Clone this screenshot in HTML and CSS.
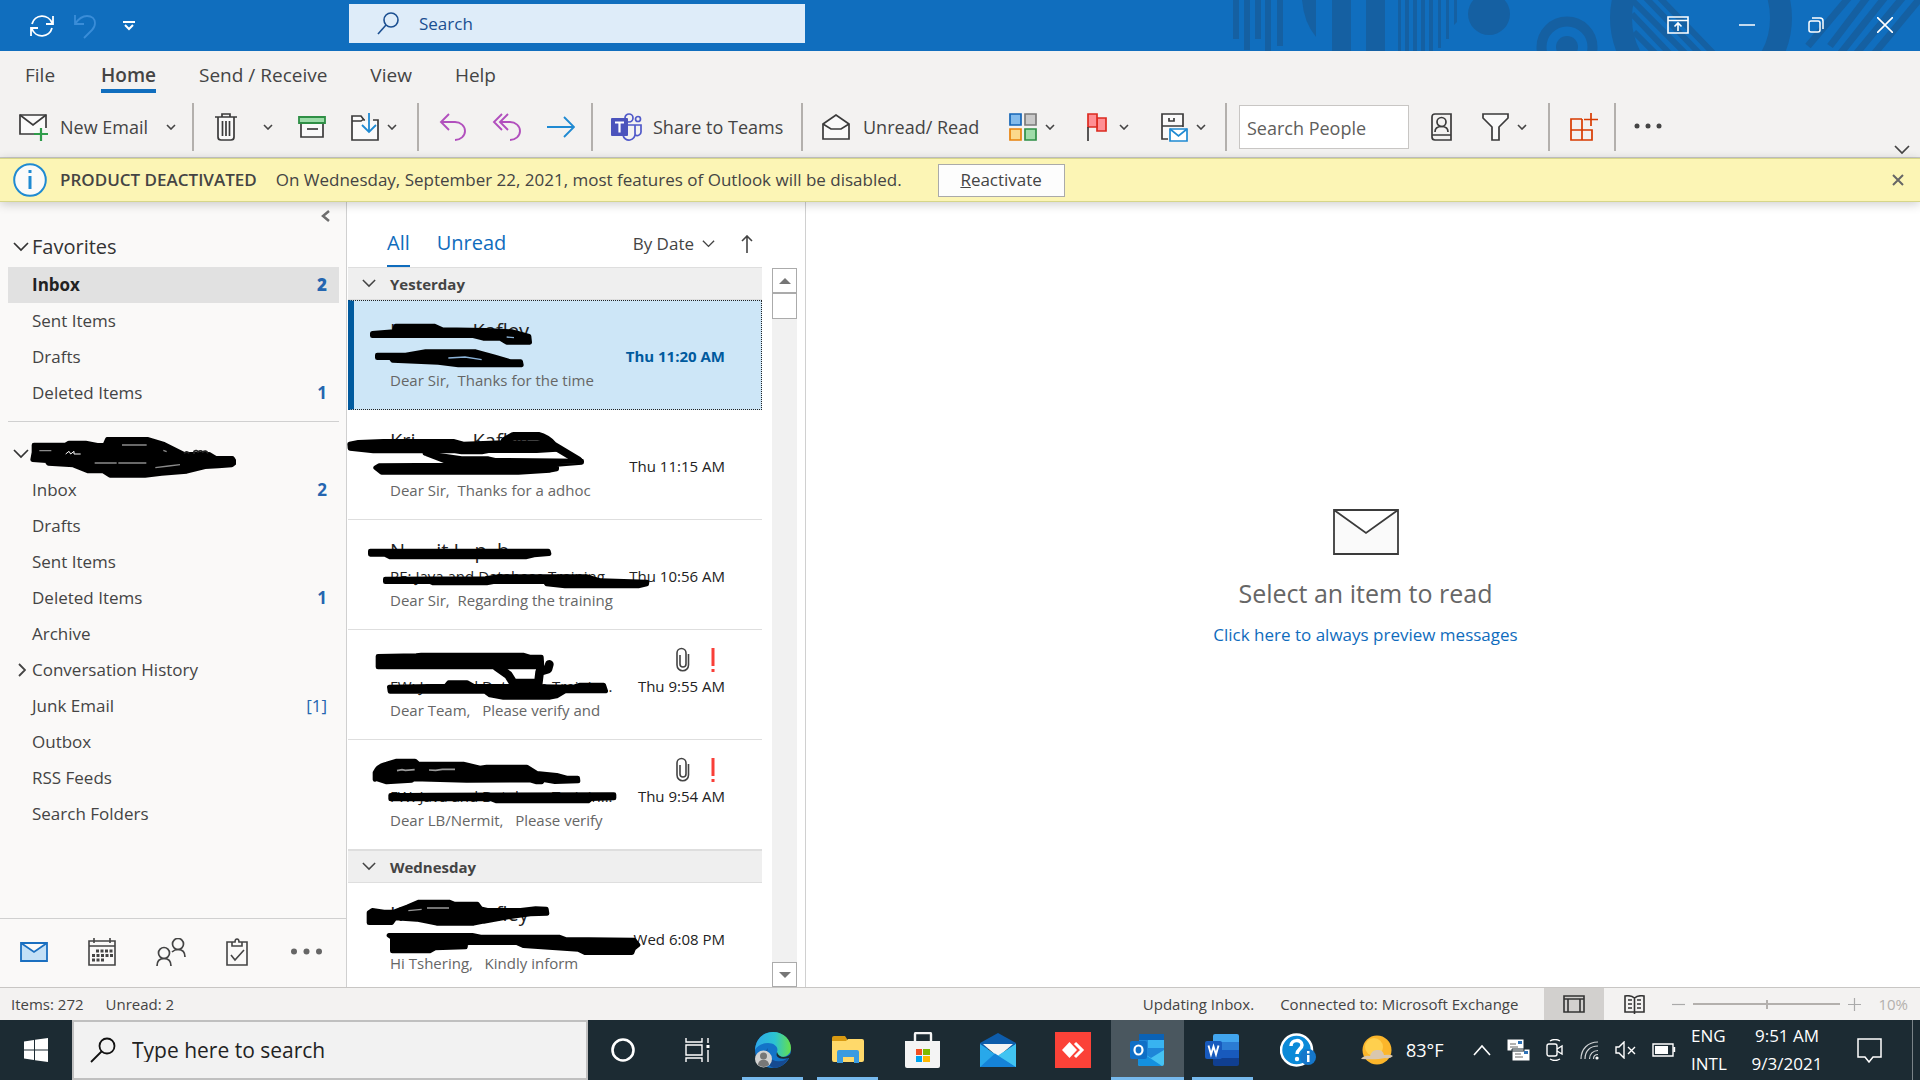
FILE: index.html
```html
<!DOCTYPE html>
<html lang="en">
<head>
<meta charset="utf-8">
<title>Inbox - Outlook</title>
<link rel="stylesheet" href="styles.css">
</head>
<body>
<svg class="defs" aria-hidden="true">
  <symbol id="chev" viewBox="0 0 10 6"><path d="M1 1l4 4 4-4" fill="none" stroke="currentColor" stroke-width="1.6"/></symbol>
  <symbol id="chev-lg" viewBox="0 0 16 10"><path d="M1 1l7 7 7-7" fill="none" stroke="currentColor" stroke-width="1.7"/></symbol>
  <symbol id="clip" viewBox="0 0 14 26"><path d="M4 8v9a3 3 0 0 0 6 0V6a4.500 4.500 0 0 0-9 0v12a5.500 5.500 0 0 0 11.500 0V7" fill="none" stroke="#444" stroke-width="1.6"/></symbol>
  <symbol id="bang" viewBox="0 0 4 26"><path d="M.5 1h3v18h-3zM.5 22h3v3h-3z" fill="#f93f38"/></symbol>
</svg>

<header class="titlebar">
  <svg class="art" viewBox="0 0 720 51" width="720" height="51" aria-hidden="true">
    <g fill="#1560a2">
      <path d="M33 0h6v39h-6zM44 0h6v50h-6zM55 0h6v39h-6zM65 0h6v51h-6zM77 0h6v46h-6zM132 0h19v51h-19zM166 0h19v51h-19z"/>
      <path d="M102 0h14v37q-12-14-14-37z"/>
      <path d="M198 0h3v51h-3zM205 0h4v51h-4zM213 0h4v51h-4zM221 0h4v51h-4zM229 0h4v51h-4zM238 0h3v48h-3zM246 0h3v39h-3zM254 0h3v22l-3 3z"/>
      <circle cx="289" cy="14" r="21"/><circle cx="367" cy="47" r="11"/>
    </g>
    <circle cx="367" cy="47" r="25.500" fill="none" stroke="#1560a2" stroke-width="10"/>
    <circle cx="501" cy="18" r="80" fill="none" stroke="#1560a2" stroke-width="22"/>
    <g stroke="#1560a2" stroke-width="6" fill="none">
      <path d="M458 -4l56 58M444 -4l56 58M430 -2l56 56M432 14l38 40M434 32l22 22"/>
      <path d="M650 -4L608 46M668 -4L630 46M686 -4L640 54M704 -4L656 54M722 -4L674 54" stroke-width="7"/>
    </g>
  </svg>
  <div class="quick">
    <button aria-label="Send and receive"><svg width="26" height="26" viewBox="0 0 26 26" fill="none" stroke="#fff" stroke-width="1.800"><path d="M3 11a10.500 10.500 0 0 1 20-1M23 15a10.500 10.500 0 0 1-20 1M24 3v8h-7M2 23v-8h7"/></svg></button>
    <button aria-label="Undo"><svg width="24" height="26" viewBox="0 0 24 26" fill="none" stroke="#3a8dd8" stroke-width="1.800"><path d="M2 2v9h9M2 11C6 5 10 3 14 3c5 0 8 3 8 7 0 3-1 5-3 7l-8 8"/></svg></button>
    <button aria-label="Customize toolbar"><svg width="12" height="10" viewBox="0 0 12 10" fill="none" stroke="#fff" stroke-width="2"><path d="M0 1h12M2 4l4 4 4-4"/></svg></button>
  </div>
  <label class="title-search"><svg width="22" height="24" viewBox="0 0 22 24" fill="none" stroke="#1b4f91" stroke-width="1.600"><circle cx="14" cy="8" r="7"/><path d="M9 13L1 22"/></svg><input type="text" placeholder="Search" aria-label="Search"></label>
  <div class="window-buttons">
    <button aria-label="Ribbon display"><svg width="22" height="18" viewBox="0 0 22 18" fill="none" stroke="#fff" stroke-width="1.600"><path d="M1 1h20v16H1zM1 4.500h20M11 15V7M7.500 10.500L11 7l3.500 3.500"/></svg></button>
    <button aria-label="Minimize"><svg width="16" height="16" viewBox="0 0 16 16" stroke="#fff" stroke-width="1.500"><path d="M0 8h16"/></svg></button>
    <button aria-label="Restore"><svg width="16" height="16" viewBox="0 0 16 16" fill="none" stroke="#fff" stroke-width="1.500"><rect x="1" y="4" width="11" height="11" rx="2"/><path d="M4 1h8a3 3 0 0 1 3 3v8"/></svg></button>
    <button aria-label="Close"><svg width="16" height="16" viewBox="0 0 16 16" stroke="#fff" stroke-width="1.600"><path d="M0 0l16 16M16 0L0 16"/></svg></button>
  </div>
</header>

<nav class="tabs">
  <a href="#">File</a><a href="#" class="on">Home</a><a href="#">Send / Receive</a><a href="#">View</a><a href="#">Help</a>
</nav>

<div class="ribbon">
  <div class="group g-new">
    <button class="wide"><svg width="30" height="28" viewBox="0 0 30 28" fill="none" stroke="#3b3b3b" stroke-width="1.700"><path d="M18 21H1V2h26v13" fill="#fafafa"/><path d="M1 2l13 10L27 2"/><path d="M22 15v13M15 21h14" stroke="#2e9c4a" stroke-width="2.200"/></svg>New Email</button>
    <button aria-label="New items"><svg class="c"><use href="#chev"/></svg></button>
  </div>
  <div class="group g-del">
    <button aria-label="Delete"><svg width="24" height="28" viewBox="0 0 24 28" fill="none" stroke="#3b3b3b" stroke-width="1.700"><path d="M4 4v20q0 3 3 3h10q3 0 3-3V4" fill="#fafafa"/><path d="M1 4h22M8 4V1h8v3M8.500 8v15M12 8v15M15.500 8v15"/></svg></button>
    <button aria-label="Delete options"><svg class="c"><use href="#chev"/></svg></button>
    <button aria-label="Archive"><svg width="28" height="24" viewBox="0 0 28 24" fill="none"><path d="M3 7h22v15H3z" fill="#fafafa" stroke="#3b3b3b" stroke-width="1.700"/><path d="M1 2h26v6H1z" fill="#9bdba8" stroke="#2e8f45" stroke-width="1.800"/><path d="M9 14h11" stroke="#3b3b3b" stroke-width="1.700"/></svg></button>
    <button class="pair" aria-label="Move"><svg width="28" height="28" viewBox="0 0 28 28" fill="none"><path d="M1 27V3h9l3 4h14v20z" fill="#fafafa" stroke="#3b3b3b" stroke-width="1.700"/><path d="M1 8h9l3-2" stroke="#3b3b3b" stroke-width="1.500"/><path d="M14 1h8v7h-8z" fill="#f3f2f1"/><path d="M18 0v19M11 12l7 7 7-7" stroke="#1f8ad2" stroke-width="1.800"/></svg><svg class="c"><use href="#chev"/></svg></button>
  </div>
  <div class="group g-reply">
    <button aria-label="Reply"><svg width="28" height="28" viewBox="0 0 28 28" fill="none" stroke="#b14fbd" stroke-width="1.900"><path d="M10 1L2 9l8 8M2 9h14a10 9 0 0 1 0 18"/></svg></button>
    <button aria-label="Reply all"><svg width="30" height="28" viewBox="0 0 30 28" fill="none" stroke="#b14fbd" stroke-width="1.900"><path d="M10 1L2 9l8 8M16 1L8 9l8 8M8 9h10a10 9 0 0 1 0 18"/></svg></button>
    <button aria-label="Forward"><svg width="28" height="22" viewBox="0 0 28 22" fill="none" stroke="#1f8ad2" stroke-width="1.900"><path d="M0 11h26M17 1l10 10-10 10"/></svg></button>
  </div>
  <div class="group g-teams">
    <button class="wide"><svg width="31" height="28" viewBox="0 0 31 28" fill="none" stroke="#5059c9" stroke-width="1.700"><circle cx="18" cy="5" r="4"/><circle cx="27" cy="6" r="2.500"/><path d="M17 12h7v8a6 6 0 0 1-12 2M24 12h6v6a4 4 0 0 1-6 4"/><rect x="0" y="5" width="17" height="18" rx="1" fill="#4b53bc" stroke="none"/><path d="M4 9.500h9M8.500 9.500v10" stroke="#fff" stroke-width="2.200"/></svg>Share to Teams</button>
  </div>
  <div class="group g-tags">
    <button class="wide"><svg width="28" height="26" viewBox="0 0 28 26" fill="none" stroke="#3b3b3b" stroke-width="1.700"><path d="M1 10L14 1l13 9v15H1z" fill="#fafafa"/><path d="M1 10l8 5h10l8-5"/></svg>Unread/ Read</button>
    <button class="pair" aria-label="Categorize"><svg width="28" height="28" viewBox="0 0 28 28" stroke-width="1.700"><path d="M1 1h11v11H1z" fill="#83bbec" stroke="#1566b7"/><path d="M16 1h11v11H16z" fill="#c9c9c9" stroke="#7b7b7b"/><path d="M1 16h11v11H1z" fill="#fbd98b" stroke="#e8830c"/><path d="M16 16h11v11H16z" fill="#9fdca9" stroke="#2e8f45"/></svg><svg class="c"><use href="#chev"/></svg></button>
    <button class="pair flag" aria-label="Follow up"><svg width="21" height="28" viewBox="0 0 21 28" fill="#ff8f94" stroke="#dc2b20" stroke-width="1.700"><path d="M10 5h9v13h-9z"/><path d="M1 1h9v13H1z"/><path d="M1 14v14" stroke="#3b3b3b"/></svg><svg class="c"><use href="#chev"/></svg></button>
    <button class="pair" aria-label="Rules"><svg width="27" height="29" viewBox="0 0 27 29" fill="none" stroke="#3b3b3b" stroke-width="1.700"><path d="M7 26H1V1h21v13" fill="#fafafa"/><path d="M1 13h21M8 5v3h5V5"/><path d="M9 16h17v12H9z" fill="#fff" stroke="#1f8ad2"/><path d="M9 16l8.500 7L26 16" stroke="#1f8ad2"/></svg><svg class="c"><use href="#chev"/></svg></button>
  </div>
  <div class="group g-find">
    <input type="text" class="people" placeholder="Search People" aria-label="Search People">
    <button aria-label="Address book"><svg width="21" height="28" viewBox="0 0 21 28" fill="none" stroke="#3b3b3b" stroke-width="1.700"><path d="M20 1H4Q1 1 1 4v20q0 3 3 3h16zM1 22h19"/><circle cx="10.500" cy="9" r="4.500"/><path d="M4 19c0-4 3-5.500 6.500-5.500S17 15 17 19"/></svg></button>
    <button class="pair" aria-label="Filter email"><svg width="27" height="28" viewBox="0 0 27 28" fill="#fafafa" stroke="#3b3b3b" stroke-width="1.700"><path d="M1 1h25v4L17 14v13h-7V14L1 5z"/></svg><svg class="c"><use href="#chev"/></svg></button>
  </div>
  <div class="group g-add">
    <button aria-label="Get add-ins"><svg width="29" height="28" viewBox="0 0 29 28" fill="none" stroke="#d83b01" stroke-width="1.700"><path d="M12 6H1v21h21V17H1M12 6v21M21 0v13M14 6.500h14"/></svg></button>
  </div>
  <div class="group g-more">
    <button aria-label="More commands"><svg width="28" height="6" viewBox="0 0 28 6" fill="#444"><circle cx="3" cy="3" r="2.500"/><circle cx="14" cy="3" r="2.500"/><circle cx="25" cy="3" r="2.500"/></svg></button>
    <button class="collapse" aria-label="Collapse ribbon"><svg width="16" height="10"><use href="#chev-lg"/></svg></button>
  </div>
</div>

<div class="notice">
  <svg width="34" height="34" viewBox="0 0 34 34"><circle cx="17" cy="17" r="15.800" fill="#fafafa" stroke="#1f8ad2" stroke-width="2"/><path d="M15.500 7h3v3h-3zM15.500 13h3v13h-3z" fill="#1f8ad2"/></svg>
  <strong>PRODUCT DEACTIVATED</strong>
  <span>On Wednesday, September 22, 2021, most features of Outlook will be disabled.</span>
  <button class="react"><u>R</u>eactivate</button>
  <button class="dismiss" aria-label="Dismiss"><svg width="12" height="12" viewBox="0 0 12 12" stroke="#666" stroke-width="2"><path d="M1 1l10 10M11 1L1 11"/></svg></button>
</div>

<main class="main">
  <aside class="side">
    <button class="fold" aria-label="Minimize folder pane"><svg width="9" height="12" viewBox="0 0 9 12" fill="none" stroke="#6e6e6e" stroke-width="2.500"><path d="M8 1L2 6l6 5"/></svg></button>
    <h2><svg width="16" height="10"><use href="#chev-lg"/></svg>Favorites</h2>
    <ul>
      <li class="sel"><a href="#">Inbox</a><b>2</b></li>
      <li><a href="#">Sent Items</a></li>
      <li><a href="#">Drafts</a></li>
      <li><a href="#">Deleted Items</a><b>1</b></li>
    </ul>
    <h2 class="account"><svg width="16" height="10"><use href="#chev-lg"/></svg>
      <svg class="ink" viewBox="84 702 624 144" width="208" height="48" aria-hidden="true"><path d="M102 735h95l10-6h50l35 7h22l8-18h120l50 15 60 30h75l20 12h50l8 12-10 8-40 3-40 2-55 14-75 6-50 6H330l-20-13h-45l-45-18-75-5-5-8-42-3 4-22z" fill="#000" stroke="#000" stroke-width="14" stroke-linejoin="round"/><path d="M118 752h36M366 735h74M284 789h66M355 789h84M466 803l40-5 34-4M490 751l10 4" fill="none" stroke="#8b8b8b" stroke-width="4"/><path d="M197 762l10-8 5 8 10-8v8h20" fill="none" stroke="#fafafa" stroke-width="3"/><path d="M552 760q8-8 16 0M582 762v-8q8-5 12 2 8-7 14 0 10-7 16 4" fill="none" stroke="#222" stroke-width="5"/></svg>
    </h2>
    <ul>
      <li><a href="#">Inbox</a><b>2</b></li>
      <li><a href="#">Drafts</a></li>
      <li><a href="#">Sent Items</a></li>
      <li><a href="#">Deleted Items</a><b>1</b></li>
      <li><a href="#">Archive</a></li>
      <li class="tree"><svg width="8" height="14" viewBox="0 0 8 14" fill="none" stroke="#444" stroke-width="1.800"><path d="M1 1l6 6-6 6"/></svg><a href="#">Conversation History</a></li>
      <li><a href="#">Junk Email</a><span>[1]</span></li>
      <li><a href="#">Outbox</a></li>
      <li><a href="#">RSS Feeds</a></li>
      <li><a href="#">Search Folders</a></li>
    </ul>
    <nav class="modules">
      <button aria-label="Mail"><svg width="28" height="20" viewBox="0 0 28 20" fill="#c3e0f6" stroke="#1a6fc0" stroke-width="1.800"><path d="M1 1h26v18H1zM1 1l13 9L27 1"/></svg></button>
      <button aria-label="Calendar"><svg width="28" height="28" viewBox="0 0 28 28" fill="none" stroke="#444" stroke-width="1.600"><path d="M1 3h26v24H1zM1 8h26M6 0v5M22 0v5"/><path d="M8 13h17M4 17.500h21M4 22h12" stroke-width="3" stroke-dasharray="3 1.500"/></svg></button>
      <button aria-label="People"><svg width="30" height="28" viewBox="0 0 30 28" fill="none" stroke="#444" stroke-width="1.700"><circle cx="22" cy="6" r="5.500"/><circle cx="8" cy="15" r="5.500"/><path d="M1 28c0-5 3-7.500 7-7.500s7 2.500 7 7.500M16 14c2-2 3.500-2.500 6-2.500 4 0 7 2.500 7 7.500"/></svg></button>
      <button aria-label="Tasks"><svg width="22" height="28" viewBox="0 0 22 28" fill="none" stroke="#444" stroke-width="1.600"><path d="M6 4H1v23h20V4h-5M6 8V4h3c0-4 4-4 4 0h3v4zM5 17l4 5 9-10"/></svg></button>
      <button aria-label="More"><svg width="31" height="7" viewBox="0 0 31 7" fill="#666"><circle cx="3" cy="3.500" r="3"/><circle cx="15.500" cy="3.500" r="3"/><circle cx="28" cy="3.500" r="3"/></svg></button>
    </nav>
  </aside>

  <section class="list">
    <div class="list-head">
      <a href="#" class="on">All</a><a href="#">Unread</a>
      <button class="sort">By Date<svg width="13" height="8"><use href="#chev-lg"/></svg></button>
      <button aria-label="Reverse order"><svg width="12" height="18" viewBox="0 0 12 18" fill="none" stroke="#444" stroke-width="1.600"><path d="M6 18V1M1 6l5-5 5 5"/></svg></button>
    </div>
    <div class="list-body">
      <div class="mails">
        <h3><svg width="14" height="9"><use href="#chev-lg"/></svg>Yesterday</h3>
        <article class="mail picked">
          <p class="who">Kri&nbsp; &nbsp; &nbsp; &nbsp; &nbsp; &nbsp;Kafley</p>
          <p class="subj"><span></span><time>Thu 11:20 AM</time></p>
          <p class="prev">Dear Sir,&nbsp; Thanks for the time</p>
          <svg class="ink" viewBox="0 285 1380 330" width="460" height="110" aria-hidden="true"><g stroke="#000" stroke-width="14" stroke-linejoin="round"><path d="M82 385l65-5 5-17h115l25 11 130 2 80 4 50 14 2 18H485l-20-12h-50l-30-8H82z"/><path d="M97 450h85l60-10h150l55 15 50 15h30l2 10H340l-60-8-137-6-6-8H97z"/></g><path d="M310 459l50-3 50 8M485 396l22 2" fill="none" stroke="#8bb3d8" stroke-width="4"/></svg>
        </article>
        <article class="mail">
          <p class="who">Kri&nbsp; &nbsp; &nbsp; &nbsp; &nbsp; &nbsp;Kafley</p>
          <p class="subj"><span></span><time>Thu 11:15 AM</time></p>
          <p class="prev">Dear Sir,&nbsp; Thanks for a adhoc</p>
          <svg class="ink" viewBox="0 612 1380 330" width="460" height="110" aria-hidden="true"><g stroke="#000" stroke-width="14" stroke-linejoin="round" stroke-linecap="round"><path d="M14 714l26-5 75-3h210l30 8 120-4h110l50 20-60 4H430l-20 4H350l-20-3H85l-70-8z"/><path d="M480 704l25-14h75q25 6 45 28l75 45" fill="none" stroke-width="24"/><path d="M240 742l110 16h80l20 5 260 2v4l-75 6v14l-20 4-95 6H110l-18-14 10-6 230-2z"/></g></svg>
        </article>
        <article class="mail">
          <p class="who">N&nbsp; &nbsp; &nbsp; it L&nbsp; p&nbsp; h</p>
          <p class="subj"><span>RE: Java and Database Training</span><time>Thu 10:56 AM</time></p>
          <p class="prev">Dear Sir,&nbsp; Regarding the training</p>
          <svg class="ink" viewBox="0 -3 1380 330" width="460" height="110" aria-hidden="true"><g stroke="#000" stroke-width="14" stroke-linejoin="round"><path d="M76 90h534l2 8-45 4-25 6H135l-15-8H76z"/><path d="M121 174l300-1 40-6h265l40 12 140 4-1 6-25 6H660l-55-6-5-7H445l-20 4H265l-10-4H121z"/></g></svg>
        </article>
        <article class="mail">
          <p class="who"></p>
          <p class="subj"><span>FW: Java and Database Trainin...</span><time>Thu 9:55 AM</time></p>
          <p class="prev">Dear Team,&nbsp; &nbsp;Please verify and</p>
          <div class="marks"><svg width="14" height="26"><use href="#clip"/></svg><svg width="4" height="26"><use href="#bang"/></svg></div>
          <svg class="ink" viewBox="0 327 1380 330" width="460" height="110" aria-hidden="true"><g stroke="#000" stroke-width="14" stroke-linejoin="round" stroke-linecap="round"><path d="M99 406l115-2 15-2h305l20 6h35l2 30H99z"/><path d="M455 437l35 25 15 24h75l4-34 25-8 4-14" fill="none" stroke-width="26"/><path d="M133 498l170-3 8-10h55l20 11h140l160 2 20-6h70l6 18H660l-25 15-20 4H475l-40-7-15-11H135z"/></g></svg>
        </article>
        <article class="mail">
          <p class="who"></p>
          <p class="subj"><span>FW: Java and Database Trainin...</span><time>Thu 9:54 AM</time></p>
          <p class="prev">Dear LB/Nermit,&nbsp; &nbsp;Please verify</p>
          <div class="marks"><svg width="14" height="26"><use href="#clip"/></svg><svg width="4" height="26"><use href="#bang"/></svg></div>
          <svg class="ink" viewBox="0 657 1380 330" width="460" height="110" aria-hidden="true"><g stroke="#000" stroke-width="14" stroke-linejoin="round"><path d="M90 755q8-20 35-26l30-9h55l10 9h135l50 12 20-3h120l30 19 60 6 30 8h33l1 9-69 2-35-6-5 7h-15l-20-6-190 1-160-4-5 4-75 5-30-10-5 2z"/><path d="M137 823h50l70-1 550-1v10l-69 2-8 7H455l-15-6H137z"/></g><path d="M156 749l15-3 10 2 28-2M252 747l20 1 20-3h38" fill="none" stroke="#999" stroke-width="5"/></svg>
        </article>
        <h3><svg width="14" height="9"><use href="#chev-lg"/></svg>Wednesday</h3>
        <article class="mail last">
          <p class="who">K&nbsp; &nbsp; &nbsp; &nbsp; &nbsp; &nbsp; &nbsp; &nbsp; &nbsp; fley</p>
          <p class="subj"><span></span><time>Wed 6:08 PM</time></p>
          <p class="prev">Hi Tshering,&nbsp; &nbsp;Kindly inform</p>
          <svg class="ink" viewBox="0 129 1380 330" width="460" height="110" aria-hidden="true"><g stroke="#000" stroke-width="14" stroke-linejoin="round"><path d="M72 248v-30l10-7 35 5h30l40-15 35-15h90l15 6h70l10 14 20 5h100l45-5 32 1 2 13-50 2-60 8-80 14-30 6H275l-60-12-65-4-10 14z"/><path d="M132 286h250l25 5h235l20 7 205 2 12 15-13 10-5 13H720l-20-10-165-11-20-9-130-1-22 2-2 12-91 3-16 9H142v-40z"/></g><path d="M246 204h66M190 212l40-4" stroke="#999" stroke-width="4"/></svg>
        </article>
      </div>
      <div class="scroll"><button aria-label="Scroll up"><svg width="12" height="6" viewBox="0 0 12 6" fill="#767676"><path d="M0 6l6-6 6 6z"/></svg></button><i></i><button class="down" aria-label="Scroll down"><svg width="12" height="6" viewBox="0 0 12 6" fill="#767676"><path d="M0 0l6 6 6-6z"/></svg></button></div>
    </div>
  </section>

  <section class="reader">
    <svg width="66" height="46" viewBox="0 0 66 46" fill="#fafafa" stroke="#3b3b3b" stroke-width="1.800"><path d="M1 1h64v44H1zM1 1l32 23L65 1"/></svg>
    <p>Select an item to read</p>
    <a href="#">Click here to always preview messages</a>
  </section>
</main>

<footer class="status">
  <span class="items">Items: 272</span><span>Unread: 2</span>
  <span class="sync">Updating Inbox.</span><span class="conn">Connected to: Microsoft Exchange</span>
  <button class="view on" aria-label="Normal view"><svg width="22" height="18" viewBox="0 0 22 18" fill="none" stroke="#333" stroke-width="1.600"><path d="M1 1h20v16H1zM1 4h20M5 4v13M17 4v13M5 17V4"/></svg></button>
  <button class="view" aria-label="Reading view"><svg width="21" height="19" viewBox="0 0 21 19" fill="none" stroke="#333" stroke-width="1.600"><path d="M10.500 3Q7 0 1 1v16h19V1q-6-1-9.500 2v16M4 5h4M4 9h4M4 13h4M13 5h4M13 9h4M13 13h4"/></svg></button>
  <span class="zoom"><svg width="13" height="13" viewBox="0 0 13 13" stroke="#aaa" stroke-width="1.200"><path d="M0 6.500h13"/></svg><input type="range" aria-label="Zoom" value="50"><svg width="13" height="13" viewBox="0 0 13 13" stroke="#aaa" stroke-width="1.200"><path d="M0 6.500h13M6.500 0v13"/></svg></span>
  <span class="pct">10%</span>
</footer>

<div class="taskbar">
  <button class="start" aria-label="Start"><svg width="24" height="24" viewBox="0 0 24 24" fill="#fff"><path d="M0 3.500l10-1.500v9.500H0zM11 1.800L24 0v11.500H11zM0 12.500h10V22L0 20.500zM11 12.500h13V24l-13-1.800z"/></svg></button>
  <label class="task-search"><svg width="26" height="26" viewBox="0 0 26 26" fill="none" stroke="#111" stroke-width="1.800"><circle cx="17" cy="9" r="7.500"/><path d="M12 14L1 25"/></svg><input type="text" placeholder="Type here to search" aria-label="Type here to search"></label>
  <button class="app cortana" aria-label="Cortana"><svg width="24" height="24" viewBox="0 0 24 24" fill="none" stroke="#fff" stroke-width="2.600"><circle cx="12" cy="12" r="10.500"/></svg></button>
  <button class="app" aria-label="Task view"><svg width="26" height="24" viewBox="0 0 26 24" fill="none" stroke="#fff" stroke-width="1.400"><path d="M1 0v4h16V0M1 24v-4h16v4M1 7h16v10H1zM23 0v5M23 12v12"/><path d="M21.500 7h3v3h-3z" fill="#fff" stroke="none"/></svg></button>
  <button class="app run" aria-label="Edge"><svg width="36" height="36" viewBox="0 0 36 36"><defs><linearGradient id="e1"><stop offset="0" stop-color="#2fa8e8"/><stop offset=".55" stop-color="#2bc3d2"/><stop offset="1" stop-color="#66e04a"/></linearGradient></defs><circle cx="18" cy="18" r="18" fill="#1373c8"/><path d="M0 18C1 6 9 0 18 0c11 0 18 8 18 16 0 6-5 9-9 9-5 0-6-2-5-5 2-5-3-9-9-9C7 11 2 14 0 18z" fill="url(#e1)"/><path d="M13 16c-3 7 4 15 13 13 3 0 6-2 8-4-3 7-9 11-15 11-8-2-12-13-6-20z" fill="#164a90"/><path d="M22 20c-2 5 2 8 12 6l2 0v-5c-3 5-12 6-14-1z" fill="#1c2b33"/><circle cx="8.500" cy="27" r="8.500" fill="#d2d2d2"/><circle cx="8.500" cy="24" r="3.500" fill="#777"/><path d="M3 33c0-7 11-7 11 0q-5 4-11 0z" fill="#777"/></svg></button>
  <button class="app run" aria-label="File Explorer"><svg width="32" height="28" viewBox="0 0 32 28"><path d="M0 2q0-2 2-2h11l2 3v6H0z" fill="#d99a12"/><path d="M0 5h14l2-2h14q2 0 2 2v19q0 2-2 2H2q-2 0-2-2z" fill="#ffd96a"/><path d="M5 27V16q0-2 2-2h18q2 0 2 2v11h-5v-6H11v6z" fill="#3a9be0"/></svg></button>
  <button class="app" aria-label="Store"><svg width="36" height="36" viewBox="0 0 36 36"><path d="M10 12V2q0-1 1-1h14q1 0 1 1v10" fill="none" stroke="#f4f4f4" stroke-width="2.400"/><path d="M0 9h35v25q0 2-2 2H2q-2 0-2-2z" fill="#f4f4f4"/><path d="M11 17h6v6h-6z" fill="#f25022"/><path d="M18 17h7v6h-7z" fill="#7fba00"/><path d="M11 24h6v6h-6z" fill="#00a4ef"/><path d="M18 24h7v6h-7z" fill="#ffb900"/></svg></button>
  <button class="app" aria-label="Mail"><svg width="36" height="34" viewBox="0 0 36 34"><path d="M0 10L18 0l18 10v6H0z" fill="#0d5cab"/><path d="M3 11h30L18 24z" fill="#f4f4f4"/><path d="M0 11l18 12L36 11v23H0z" fill="#28a8ea"/><path d="M36 34L15 20.500 0 34z" fill="#1583d8"/><path d="M36 11L18 22.500 36 34z" fill="#41c4f1"/></svg></button>
  <button class="app" aria-label="AnyDesk"><svg width="36" height="36" viewBox="0 0 36 36"><path d="M0 0h36v36H0z" fill="#fb4238"/><path d="M7 18l7.500-8 7.500 8-7.500 8z" fill="#fff"/><path d="M20 11l7 7-7 7" fill="none" stroke="#fff" stroke-width="3"/></svg></button>
  <button class="app run active" aria-label="Outlook"><svg width="35" height="33" viewBox="0 0 35 33"><rect x="9" width="25" height="30" rx="2" fill="#1e86d8"/><path d="M9 0h25v6H9z" fill="#0b62b5"/><path d="M18 6h8v8h-8zM26 14h8v-8h-8z" fill="#38b3f0"/><path d="M8 16l13 8 13-8v14q0 2-2 2H10q-2 0-2-2z" fill="#45c2f2"/><path d="M8 16l24 16H10q-2 0-2-2z" fill="#1490df"/><rect y="7" width="17" height="18" rx="2" fill="#0f6fc6"/><ellipse cx="8.500" cy="16" rx="4" ry="4.500" fill="none" stroke="#fff" stroke-width="2.200"/></svg></button>
  <button class="app run" aria-label="Word"><svg width="35" height="33" viewBox="0 0 35 33"><path d="M8 2q0-2 2-2h22q2 0 2 2v6H8z" fill="#41a5ee"/><path d="M8 8h26v8H8z" fill="#2b7cd3"/><path d="M8 16h26v8H8z" fill="#185abd"/><path d="M8 24h26v6q0 2-2 2H10q-2 0-2-2z" fill="#103f91"/><rect y="7" width="17" height="18" rx="2" fill="#185abd"/><path d="M3.500 11.500l2.500 9 2.500-8 2.500 8 2.500-9" fill="none" stroke="#fff" stroke-width="1.900"/></svg></button>
  <button class="app" aria-label="Get help"><svg width="36" height="34" viewBox="0 0 36 34"><circle cx="16.500" cy="17" r="15.500" fill="#0b8ad8" stroke="#fff" stroke-width="2.500"/><path d="M11 13c0-7 11-7 11-1 0 4-5 4-5 9" fill="none" stroke="#fff" stroke-width="3.500"/><circle cx="17" cy="26" r="2.200" fill="#fff"/><circle cx="28" cy="24" r="8" fill="#1577cb"/><path d="M27 18h2.500v2.500H27zM27 22h2.500v7H27z" fill="#fff"/></svg></button>
  <button class="weather"><svg width="34" height="30" viewBox="0 0 34 30"><circle cx="17" cy="15" r="14.500" fill="#fbb62b"/><circle cx="14" cy="12" r="9" fill="#ffd04e"/><path d="M1 24q3-4 9-3 2-7 8-6 5 0 6 5 7-1 9 1-3 3-8 2-8 2-24 1z" fill="#d9c7ae"/></svg>83°F</button>
  <div class="tray">
    <svg width="18" height="12" viewBox="0 0 18 12" fill="none" stroke="#fff" stroke-width="1.600"><path d="M1 11l8-9 8 9"/></svg>
    <svg width="23" height="23" viewBox="0 0 23 23"><path d="M0 0h17v12H0zM5 10h18v12H5z" fill="#fff" stroke="#1c2b33" stroke-width="1"/><path d="M11 2h4v3h-4zM17 12h4v3h-4z" fill="#2f72b7"/><path d="M3 5h6M3 8h8M8 15h6M8 18h8" stroke="#666" stroke-width="1"/></svg>
    <svg width="18" height="22" viewBox="0 0 18 22" fill="none" stroke="#fff" stroke-width="1.400"><path d="M4 2q5-3 10 0M4 20q5 3 10 0"/><rect x="1" y="5" width="10" height="12" rx="2"/><path d="M11 10l5-3v8l-5-3"/></svg>
    <svg width="19" height="19" viewBox="0 0 19 19" fill="none" stroke="#fff" stroke-width="1.200"><path d="M1 18C1 8 8 1 18 1M5 18C5 10 10 5 18 5M9.500 18c0-5 3.500-8.500 8.500-8.500M13.500 18q0-4.500 4.500-4.500" opacity=".8"/><circle cx="17" cy="17" r="1" fill="#fff"/></svg>
    <svg width="21" height="18" viewBox="0 0 21 18" fill="none" stroke="#fff" stroke-width="1.400"><path d="M1 6h3l5-5v16l-5-5H1zM13 6l7 7M20 6l-7 7"/></svg>
    <svg width="24" height="14" viewBox="0 0 24 14" fill="none" stroke="#fff" stroke-width="1.400"><path d="M1 1h20v12H1zM22.500 4v5"/><path d="M3 3h13v8H3z" fill="#fff" stroke="none"/></svg>
  </div>
  <div class="stack lang"><span>ENG</span><span>INTL</span></div>
  <div class="stack clock"><span>9:51 AM</span><span>9/3/2021</span></div>
  <button class="notes" aria-label="Notifications"><svg width="25" height="25" viewBox="0 0 25 25" fill="none" stroke="#fff" stroke-width="1.500"><path d="M1 1h23v18h-8l-4 5-4-5H1z"/></svg></button>
  <div class="peek"></div>
</div>
</body>
</html>
```
FILE: styles.css
```css
* { box-sizing: border-box; margin: 0; padding: 0; }
body {
  display: flex; flex-direction: column; min-height: 100vh;
  font: 17px/24px "Open Sans", "Noto Sans", sans-serif; color: #444; background: #fff;
}
button { border: 0; background: none; font: inherit; color: inherit; display: flex; align-items: center; justify-content: center; flex: none; }
input { font: inherit; color: inherit; border: 0; background: none; min-width: 0; }
a { color: inherit; text-decoration: none; }
ul { list-style: none; }
svg { display: block; flex: none; }
.defs { position: absolute; width: 0; height: 0; }
.c { width: 10px; height: 6px; }

/* title bar */
.titlebar { position: relative; display: flex; height: 51px; background: #106ebe; color: #fff; }
.art { position: absolute; right: 0; top: 0; }
.quick { display: flex; align-items: center; gap: 18px; width: 349px; padding-left: 29px; }
.quick button:last-child { margin-left: 8px; }
.title-search { display: flex; align-items: center; gap: 20px; width: 456px; height: 39px; margin-top: 4px; padding-left: 28px; background: #deecf9; }
.title-search input { flex: 1; color: #1b4f91; }
.title-search input::placeholder { color: #1b4f91; opacity: 1; }
.window-buttons { position: relative; display: flex; margin-left: auto; padding-right: 1px; }
.window-buttons button { width: 69px; height: 49px; }

/* tabs */
.tabs { display: flex; gap: 43px; height: 44px; padding: 10px 25px 0; background: #f3f2f1; font-size: 19px; line-height: 28px; }
.tabs a { height: 32px; white-space: nowrap; }
.tabs a:first-child { margin-right: 3px; }
.tabs .on { font-weight: 600; border-bottom: 4px solid #106ebe; }

/* ribbon */
.ribbon { display: flex; height: 63px; padding-top: 8px; background: #f3f2f1; border-bottom: 1px solid #c8c8c8; font-size: 18px; }
.group { display: flex; align-items: center; height: 48px; border-right: 2px solid #b3b0ad; white-space: nowrap; }
.group button { height: 40px; }
.wide { gap: 11px; }
.pair { gap: 8px; }
.g-new { width: 194px; padding-left: 19px; gap: 18px; }
.g-del { width: 225px; padding-left: 20px; gap: 25px; }
.g-reply { width: 174px; padding-left: 20px; gap: 25px; }
.g-teams { width: 210px; padding-left: 18px; }
.g-tags { width: 424px; padding-left: 19px; gap: 26px; }
.g-tags .wide { gap: 13px; margin-right: 4px; }
.g-tags .flag { gap: 11px; margin: 0 6px; }
.g-find { width: 323px; padding-left: 12px; gap: 22px; }
.g-find button + button { margin-left: 8px; }
.people { width: 170px; height: 44px; padding: 2px 0 0 7px; border: 1px solid #c8c6c4; background: #fff; }
.people::placeholder { color: #605e5c; opacity: 1; }
.g-add { width: 66px; padding-left: 20px; }
.g-more { flex: 1; height: 54px; padding: 0 10px 0 18px; border: 0; justify-content: space-between; align-items: flex-start; }
.g-more button { height: 46px; }
.group .collapse { align-self: flex-end; height: 14px; }

/* notice */
.notice { position: relative; display: flex; align-items: center; height: 44px; padding: 0 16px 0 13px; background: #fcf5b5; border: solid #d6d68a; border-width: 1px 0; box-shadow: 0 2px 10px rgba(0,0,0,.2); white-space: nowrap; }
.notice strong { margin: 0 19px 0 13px; font-weight: 600; }
.react { width: 127px; height: 33px; margin-left: 36px; border: 1px solid #aaa; background: #fdfdfd; }
.dismiss { margin-left: auto; width: 12px; }

.main { display: flex; flex: 1; }

/* folder pane */
.side { display: flex; flex-direction: column; width: 347px; padding-top: 6px; background: #faf9f8; border-right: 1px solid #d0d0d0; }
.fold { align-self: flex-end; height: 12px; margin: 2px 16px 9px 0; }
.side h2 { position: relative; display: flex; align-items: center; gap: 3px; height: 32px; padding-left: 13px; font-size: 20px; font-weight: 400; color: #333; }
.side ul { margin: 0 7px 0 8px; }
.side li { display: flex; align-items: center; justify-content: space-between; height: 36px; padding: 0 12px 0 24px; }
.side ul:first-of-type { margin-top: 4px; padding-bottom: 10px; border-bottom: 1px solid #d0d0d0; }
.side li.sel { background: #e1e1e1; font-weight: 700; color: #222; }
.side li b, .side li span { color: #2566b0; }
.side li.tree { justify-content: flex-start; gap: 6px; padding-left: 10px; }
.side .account { height: 50px; padding-top: 14px; }
.account .ink { position: absolute; left: 28px; top: 12px; }
.modules { display: flex; align-items: center; gap: 40px; height: 69px; margin-top: auto; padding: 0 0 3px 20px; border-top: 1px solid #d0d0d0; }
.modules button:last-child { margin-left: 3px; }

/* message list */
.list { width: 459px; border-right: 1px solid #d0d0d0; padding-right: 8px; }
.list-head { display: flex; align-items: flex-end; height: 65px; padding-left: 40px; color: #0f6cbd; margin-right: 44px; }
.list-head a { height: 38px; font-size: 20px; line-height: 27px; margin-right: 27px; }
.list-head .on { border-bottom: 2px solid #0f6cbd; }
.list-head button { color: #444; height: 46px; }
.sort { gap: 8px; margin-left: auto; margin-right: 26px; }
.list-body { display: flex; gap: 10px; padding-left: 1px; }
.mails { width: 414px; }
.mails h3 { display: flex; align-items: center; gap: 14px; height: 33px; padding-left: 14px; border: solid #dedede; border-width: 1px 0; background: #efefef; font-size: 15px; }
.mail { position: relative; height: 110px; padding: 18px 37px 0 42px; border-bottom: 1px solid #dedede; font-size: 15px; color: #222; white-space: nowrap; }
.mail p { height: 24px; line-height: 24px; }
.mail .who { height: 26px; font-size: 20px; line-height: 26px; }
.mail .subj { display: flex; justify-content: space-between; }
.mail .subj span { flex: 1; width: 0; }
.mail .prev { color: #666; }
.mail.picked { padding: 17px 36px 0 36px; border: 1px dotted #222; border-left: 6px solid #005a9e; background: #cde6f7; }
.mail.picked time { font-weight: 700; color: #005a9e; }
.mail.last { height: 104px; border: 0; }
.mail .ink { position: absolute; left: -3px; top: 0; overflow: visible; }
.mail.picked .ink { left: -9px; top: -1px; }
.marks { position: absolute; right: 47px; top: 17px; display: flex; gap: 21px; }
.scroll { display: flex; flex-direction: column; width: 25px; margin-top: 1px; background: #f1f1f1; }
.scroll button, .scroll i { width: 25px; height: 25px; border: 1px solid #ababab; background: #fff; }
.scroll i { height: 26px; }
.scroll .down { margin-top: auto; }

/* reading pane */
.reader { display: flex; flex: 1; flex-direction: column; align-items: center; padding: 307px 0 0 5px; }
.reader p { margin: 20px 0 12px; font-size: 25px; line-height: 36px; color: #666; }
.reader a { color: #0f6cbd; }

/* status bar */
.status { display: flex; align-items: center; height: 33px; padding: 0 12px 0 11px; background: #f3f2f1; border-top: 1px solid #c8c6c4; font-size: 15px; white-space: nowrap; }
.items { margin-right: 22px; }
.sync { margin-left: auto; }
.conn { margin: 0 26px; }
.view { width: 60px; height: 32px; }
.view.on { background: #d2d0ce; }
.zoom { display: flex; align-items: center; gap: 8px; margin: 0 17px 0 8px; }
.zoom input { appearance: none; width: 147px; height: 12px; background: linear-gradient(#b3b0ad, #b3b0ad) center / 100% 2px no-repeat; }
.zoom input::-webkit-slider-thumb { appearance: none; width: 2px; height: 9px; background: #b3b0ad; }
.pct { color: #b3b0ad; }

/* taskbar */
.taskbar { display: flex; align-items: stretch; height: 60px; background: #1c2b33; color: #fff; }
.start { width: 72px; }
.task-search { display: flex; align-items: center; gap: 16px; width: 516px; padding-left: 16px; border: 2px solid #c0c0c0; background: #f2f2f2; font-size: 21px; }
.task-search input { flex: 1; }
.task-search input::placeholder { color: #222; opacity: 1; }
.app { width: 61px; margin-right: 14px; border-bottom: 3px solid transparent; border-top: 3px solid transparent; }
.cortana { margin-left: 4px; }
.run { border-bottom-color: #76b9ed; }
.app.active { width: 73px; margin: 0 8px 0 -6px; border-top-color: #4a575f; background: #4a575f; }
.weather { gap: 12px; margin-left: 18px; font-size: 18px; }
.tray { display: flex; align-items: center; gap: 16px; margin-left: auto; }
.stack { display: flex; flex-direction: column; justify-content: center; line-height: 28px; }
.lang { margin-left: 15px; width: 59px; font-size: 17px; }
.clock { width: 74px; align-items: center; font-size: 17px; }
.notes { margin: 0 30px 0 33px; }
.peek { width: 8px; border-left: 1px solid #7a8388; }
```
